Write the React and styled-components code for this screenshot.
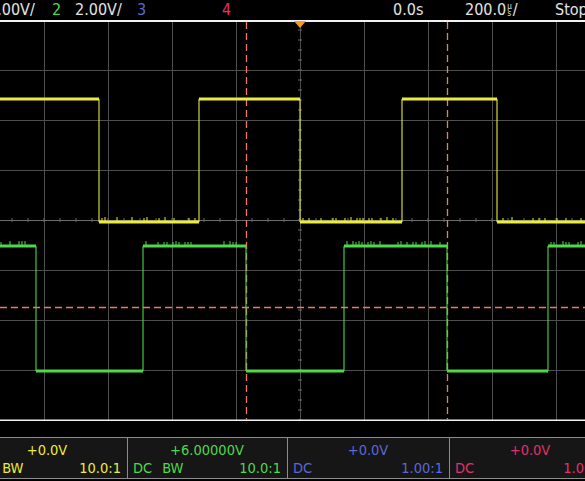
import React from 'react';
import styled, { createGlobalStyle } from 'styled-components';

const GlobalStyle = createGlobalStyle`
  html, body {
    margin: 0;
    padding: 0;
    background: #000;
  }
`;

const COLORS = {
  white: '#e4e4e4',
  ch1: '#ecec3c',
  ch2: '#4fd84a',
  ch3: '#5b68d6',
  ch4: '#e2306c',
  grid: '#4e4e4e',
  cursor: '#f07a62',
  trig: '#ff9a1c',
};

const Screen = styled.div`
  width: 585px;
  height: 481px;
  background: #000;
  overflow: hidden;
  display: flex;
  flex-direction: column;
  font-family: "Liberation Sans Narrow", "DejaVu Sans Condensed", "Liberation Sans", sans-serif;
`;

const TopBar = styled.div`
  height: 20px;
  display: flex;
  align-items: center;
  white-space: nowrap;
  font-size: 16px;
  line-height: 20px;
`;

const Field = styled.span`
  flex: none;
  width: ${p => p.$w}px;
  margin-left: ${p => p.$ml || 0}px;
  color: ${p => p.$c || COLORS.white};
  display: inline-flex;
  align-items: center;
`;

const Micro = styled.span`
  display: inline-flex;
  flex-direction: column;
  font-size: 8px;
  line-height: 7px;
  margin: 0 1px;
  text-align: center;
`;

const Graticule = styled.svg`
  display: block;
  width: 585px;
  height: 401px;
  flex: none;
`;

const Footer = styled.div`
  flex: 1;
  padding-top: 16px;
  display: flex;
  flex-direction: column;
`;

const ChannelRow = styled.div`
  display: flex;
  height: 40px;
  margin-left: -32px;
  border-top: 1px solid #8c8c8c;
  border-bottom: 1px solid #8c8c8c;
`;

const Panel = styled.div`
  flex: none;
  width: ${p => p.$w}px;
  box-sizing: border-box;
  border-right: 1px solid #8c8c8c;
  background: #161616;
  color: ${p => p.$c};
  font-size: 14.5px;
  line-height: 18px;
  padding: 3px 6px 0 5px;
  display: flex;
  flex-direction: column;
`;

const Offset = styled.div`
  text-align: center;
`;

const Coupling = styled.div`
  display: flex;
  justify-content: space-between;
  white-space: nowrap;
`;

const Tags = styled.div`
  display: flex;
  gap: 10px;
`;

// pseudo-random noise spikes for the flat parts of a trace
const spikes = (x0, x1, y, dir, seed) => {
  let d = '';
  let s = seed;
  for (let x = x0 + 3; x < x1 - 3; x += 3) {
    s = (s * 9301 + 49297) % 233280;
    const r = s / 233280;
    if (r > 0.55) {
      const h = 2 + Math.round(r * 3);
      d += `M${x} ${y} V${y + dir * h} `;
    }
  }
  return d;
};

const buildTrace = (edges, hi, lo, startHigh, noiseLevel) => {
  let flat = '';
  let vert = '';
  let noise = '';
  let level = startHigh;
  let x = -5;
  edges.concat([595]).forEach((ex, i) => {
    const y = level ? hi : lo;
    flat += `M${x} ${y} H${ex} `;
    if (level === noiseLevel) noise += spikes(x, ex, y, -1, i * 37 + ex);
    if (ex < 595) vert += `M${ex} ${hi} V${lo} `;
    level = !level;
    x = ex;
  });
  return { flat, vert, noise };
};

const yellow = buildTrace([99, 199, 300, 402, 497], 99, 222, true, false);
const green = buildTrace([36, 143, 246, 344, 447, 548], 246, 371, true, true);

const vLines = Array.from({ length: 9 }, (_, i) => 44 + i * 64);
const hLines = [70, 120, 170, 270, 320, 370];

const centerTicks = () => {
  let d = '';
  for (let x = -20; x <= 600; x += 16) d += `M${x} 218 V222 `;
  for (let y = 30; y <= 420; y += 10) d += `M298 ${y} H302 `;
  return d;
};

const Trace = ({ t, color }) => (
  <g stroke={color} fill="none">
    <path d={t.vert} strokeWidth="1.2" opacity="0.9" />
    <path d={t.flat} strokeWidth="2.8" />
    <path d={t.noise} strokeWidth="1" />
  </g>
);

const Channel = ({ w, color, offset, tags, ratio }) => (
  <Panel $w={w} $c={color}>
    <Offset>{offset}</Offset>
    <Coupling>
      <Tags>{tags.map(tag => <span key={tag}>{tag}</span>)}</Tags>
      <span>{ratio}</span>
    </Coupling>
  </Panel>
);

const App = () => (
  <Screen>
    <GlobalStyle />
    <TopBar>
      <Field $w={64} $ml={-12}>2.00V/</Field>
      <Field $w={23} $c={COLORS.ch2}>2</Field>
      <Field $w={62}>2.00V/</Field>
      <Field $w={85} $c={COLORS.ch3}>3</Field>
      <Field $w={171} $c={COLORS.ch4}>4</Field>
      <Field $w={72}>0.0s</Field>
      <Field $w={90}>200.0<Micro><span>µ</span><span>s</span></Micro>/</Field>
      <Field $w={40}>Stop</Field>
    </TopBar>

    <Graticule viewBox="0 20 585 401">
      <g stroke={COLORS.grid} strokeWidth="1">
        {vLines.map(x => <line key={x} x1={x + 0.5} y1="21" x2={x + 0.5} y2="420" />)}
        {hLines.map(y => <line key={y} x1="0" y1={y + 0.5} x2="585" y2={y + 0.5} />)}
        <line x1="0" y1="220.5" x2="585" y2="220.5" stroke="#6a6a6a" />
        <path d={centerTicks()} stroke="#6a6a6a" />
      </g>
      <line x1="0" y1="21" x2="585" y2="21" stroke="#f2f2f2" strokeWidth="2" />
      <line x1="0" y1="420.5" x2="585" y2="420.5" stroke="#f2f2f2" strokeWidth="2" />

      <g stroke={COLORS.cursor} strokeWidth="1.3" strokeDasharray="7 4">
        <line x1="246.5" y1="22" x2="246.5" y2="420" />
        <line x1="447.5" y1="22" x2="447.5" y2="420" />
        <line x1="0" y1="307.5" x2="585" y2="307.5" />
      </g>

      <Trace t={green} color={COLORS.ch2} />
      <Trace t={yellow} color={COLORS.ch1} />

      <polygon points="294,21 306,21 300,28" fill={COLORS.trig} />
    </Graticule>

    <Footer>
      <ChannelRow>
        <Channel w={160} color={COLORS.ch1} offset="+0.0V" tags={['DC', 'BW']} ratio="10.0:1" />
        <Channel w={160} color={COLORS.ch2} offset="+6.00000V" tags={['DC', 'BW']} ratio="10.0:1" />
        <Channel w={162} color={COLORS.ch3} offset="+0.0V" tags={['DC']} ratio="1.00:1" />
        <Channel w={162} color={COLORS.ch4} offset="+0.0V" tags={['DC']} ratio="1.00:1" />
      </ChannelRow>
    </Footer>
  </Screen>
);

export default App;
